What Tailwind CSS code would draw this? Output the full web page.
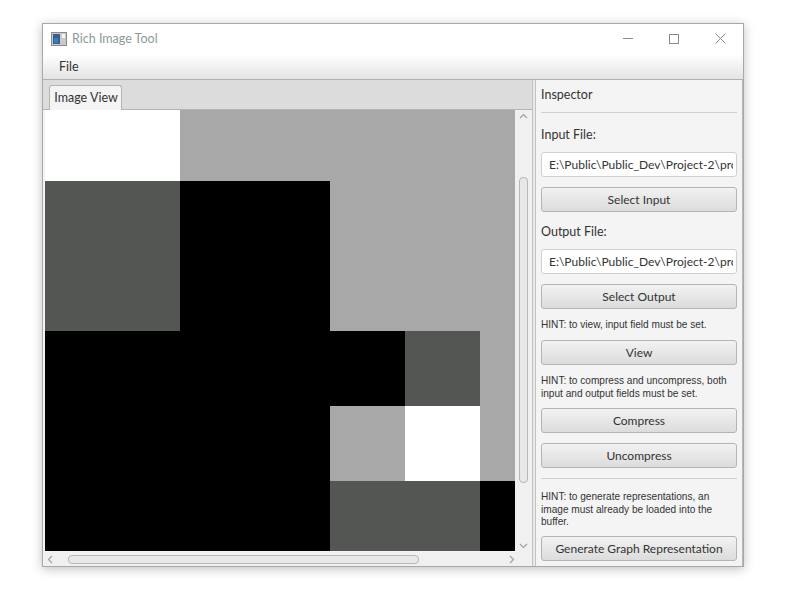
<!DOCTYPE html>
<html lang="en">
<head>
    <meta charset="UTF-8">
    <title>Rich Image Tool</title>
    <script src="https://cdn.jsdelivr.net/npm/@tailwindcss/browser@4"></script>
</head>
<body class="bg-white w-[808px] h-[595px] overflow-hidden font-['Lato','Open_Sans',sans-serif] text-[#333]">
    <div class="pt-[23px] pl-[42px]">
        <div class="w-[702px] h-[544px] flex flex-col border border-[#a8a8a8] bg-[#f4f4f4] shadow-[0_2px_10px_rgba(0,0,0,0.25)]">
            <!-- title bar -->
            <div class="h-[30px] shrink-0 bg-white flex items-center pl-[8px]">
                <svg width="16" height="14" viewBox="0 0 16 14" class="mr-[5px]">
                    <rect x="0.5" y="0.5" width="15" height="13" fill="#c9c9c9" stroke="#8a8a8a" />
                    <rect x="2" y="2" width="7" height="10" fill="#3d5e86" />
                    <rect x="3" y="6" width="4" height="5" fill="#2f7fc4" />
                    <rect x="11" y="2" width="3" height="4" fill="#f4f4f4" />
                </svg>
                <span class="text-[12.5px] text-[#8b9a95] leading-none pt-px">Rich Image Tool</span>
                <div class="ml-auto flex items-center -mt-[1px]">
                    <div class="w-[46px] flex justify-center"><div class="w-[10px] h-px bg-[#8a8a8a]"></div></div>
                    <div class="w-[46px] flex justify-center"><div class="w-[10px] h-[10px] border border-[#8a8a8a]"></div></div>
                    <div class="w-[46px] flex justify-center">
                        <svg width="11" height="11" viewBox="0 0 11 11"><path d="M0.5 0.5L10.5 10.5M10.5 0.5L0.5 10.5" stroke="#8a8a8a" fill="none" /></svg>
                    </div>
                </div>
            </div>
            <!-- menu bar -->
            <div class="h-[26px] shrink-0 bg-gradient-to-b from-white to-[#e4e4e4] border-b border-[#b0b0b0] flex items-center pl-[16px] pt-[2px]">
                <span class="text-[12.5px]">File</span>
            </div>
            <div class="flex flex-1 min-h-0">
                <!-- image pane -->
                <div class="w-[489px] shrink-0 flex flex-col pl-[1px]">
                    <div class="h-[30px] shrink-0 bg-[#dcdcdc] border-b border-[#b4b4b4] flex items-end pl-[6px] -ml-[1px]">
                        <div class="h-[25px] w-[73px] -mb-px pt-px pl-px bg-[#f4f4f4] border border-[#b4b4b4] border-b-0 rounded-t-[3px] flex items-center justify-center text-[12.5px] whitespace-nowrap">Image View</div>
                    </div>
                    <div class="flex-1 min-h-0 flex flex-col">
                        <div class="flex-1 min-h-0 flex">
                            <div class="w-[470px] h-[441px] grid grid-cols-[135px_75px_75px_75px_75px_35px] grid-rows-[71px_75px_75px_75px_75px_70px] ml-px">
                                <div class="bg-white"></div>
                                <div class="col-span-5 bg-[#a8a8a8]"></div>
                                <div class="row-span-2 bg-[#545654]"></div>
                                <div class="row-span-2 col-span-2 bg-black"></div>
                                <div class="row-span-2 col-span-3 bg-[#a8a8a8]"></div>
                                <div class="col-span-4 bg-black"></div>
                                <div class="bg-[#545654]"></div>
                                <div class="bg-[#a8a8a8]"></div>
                                <div class="col-span-3 bg-black"></div>
                                <div class="bg-[#a8a8a8]"></div>
                                <div class="bg-white"></div>
                                <div class="bg-[#a8a8a8]"></div>
                                <div class="col-span-3 bg-black"></div>
                                <div class="col-span-2 bg-[#545654]"></div>
                                <div class="bg-black"></div>
                            </div>
                            <!-- vertical scrollbar -->
                            <div class="w-[15px] flex-1 bg-[#f0f0f0] flex flex-col items-center relative">
                                <svg width="9" height="6" viewBox="0 0 9 6" class="mt-[3px]"><path d="M1 5L4.5 1.5L8 5" stroke="#a0a0a0" fill="none" stroke-width="1.2" /></svg>
                                <div class="w-[9px] h-[306px] mt-[58px] rounded-[4px] border border-[#b8b8b8] bg-[#e8e8e8]"></div>
                                <svg width="9" height="6" viewBox="0 0 9 6" class="mt-auto mb-[3px]"><path d="M1 1L4.5 4.5L8 1" stroke="#a0a0a0" fill="none" stroke-width="1.2" /></svg>
                            </div>
                        </div>
                        <!-- horizontal scrollbar -->
                        <div class="h-[14px] shrink-0 bg-[#f0f0f0] flex items-center pl-[3px] pr-[17px]">
                            <svg width="6" height="9" viewBox="0 0 6 9"><path d="M5 1L1.5 4.5L5 8" stroke="#a0a0a0" fill="none" stroke-width="1.2" /></svg>
                            <div class="w-[351px] h-[9px] ml-[15px] rounded-[4px] border border-[#b8b8b8] bg-[#e8e8e8]"></div>
                            <svg width="6" height="9" viewBox="0 0 6 9" class="ml-auto"><path d="M1 1L4.5 4.5L1 8" stroke="#a0a0a0" fill="none" stroke-width="1.2" /></svg>
                        </div>
                    </div>
                </div>
                <!-- splitter -->
                <div class="w-[4px] shrink-0 bg-[#e8e8e8] border-x border-[#c4c4c4]"></div>
                <!-- inspector -->
                <div class="flex-1 min-w-0 pl-[5px] pr-[5px] text-[12px] leading-[16px] flex flex-col border-r border-[#b8b8b8]">
                    <div class="mt-[7px] text-[12.5px]">Inspector</div>
                    <div class="h-px bg-[#cfcfcf] mt-[9px] mb-[14px]"></div>
                    <div class="text-[12.5px]">Input File:</div>
                    <div class="h-[25px] mt-[9px] bg-white border border-[#d0d0d0] rounded-[3px] pl-[7px] pr-[3px] flex items-center"><span class="block overflow-hidden whitespace-nowrap">E:\Public\Public_Dev\Project-2\project</span></div>
                    <button class="h-[25px] mt-[10px] border border-[#b4b4b4] rounded-[3px] bg-gradient-to-b from-[#f2f2f2] to-[#dcdcdc]">Select Input</button>
                    <div class="mt-[12px] text-[12.5px]">Output File:</div>
                    <div class="h-[25px] mt-[9px] bg-white border border-[#d0d0d0] rounded-[3px] pl-[7px] pr-[3px] flex items-center"><span class="block overflow-hidden whitespace-nowrap">E:\Public\Public_Dev\Project-2\project</span></div>
                    <button class="h-[25px] mt-[10px] border border-[#b4b4b4] rounded-[3px] bg-gradient-to-b from-[#f2f2f2] to-[#dcdcdc]">Select Output</button>
                    <p class="mt-[9px] text-[10.1px] leading-[13px] font-['Liberation_Sans',sans-serif]">HINT: to view, input field must be set.</p>
                    <button class="h-[25px] mt-[9px] border border-[#b4b4b4] rounded-[3px] bg-gradient-to-b from-[#f2f2f2] to-[#dcdcdc]">View</button>
                    <p class="mt-[9px] text-[10.1px] leading-[13px] font-['Liberation_Sans',sans-serif]">HINT: to compress and uncompress, both input and output fields must be set.</p>
                    <button class="h-[25px] mt-[8px] border border-[#b4b4b4] rounded-[3px] bg-gradient-to-b from-[#f2f2f2] to-[#dcdcdc]">Compress</button>
                    <button class="h-[25px] mt-[10px] border border-[#b4b4b4] rounded-[3px] bg-gradient-to-b from-[#f2f2f2] to-[#dcdcdc]">Uncompress</button>
                    <div class="h-px bg-[#cfcfcf] mt-[10px] mb-[12px]"></div>
                    <p class="text-[10.1px] leading-[12.5px] font-['Liberation_Sans',sans-serif]">HINT: to generate representations, an image must already be loaded into the buffer.</p>
                    <button class="h-[25px] mt-[7px] pt-px border border-[#b4b4b4] rounded-[3px] bg-gradient-to-b from-[#f2f2f2] to-[#dcdcdc]">Generate Graph Representation</button>
                </div>
            </div>
        </div>
    </div>
</body>
</html>
